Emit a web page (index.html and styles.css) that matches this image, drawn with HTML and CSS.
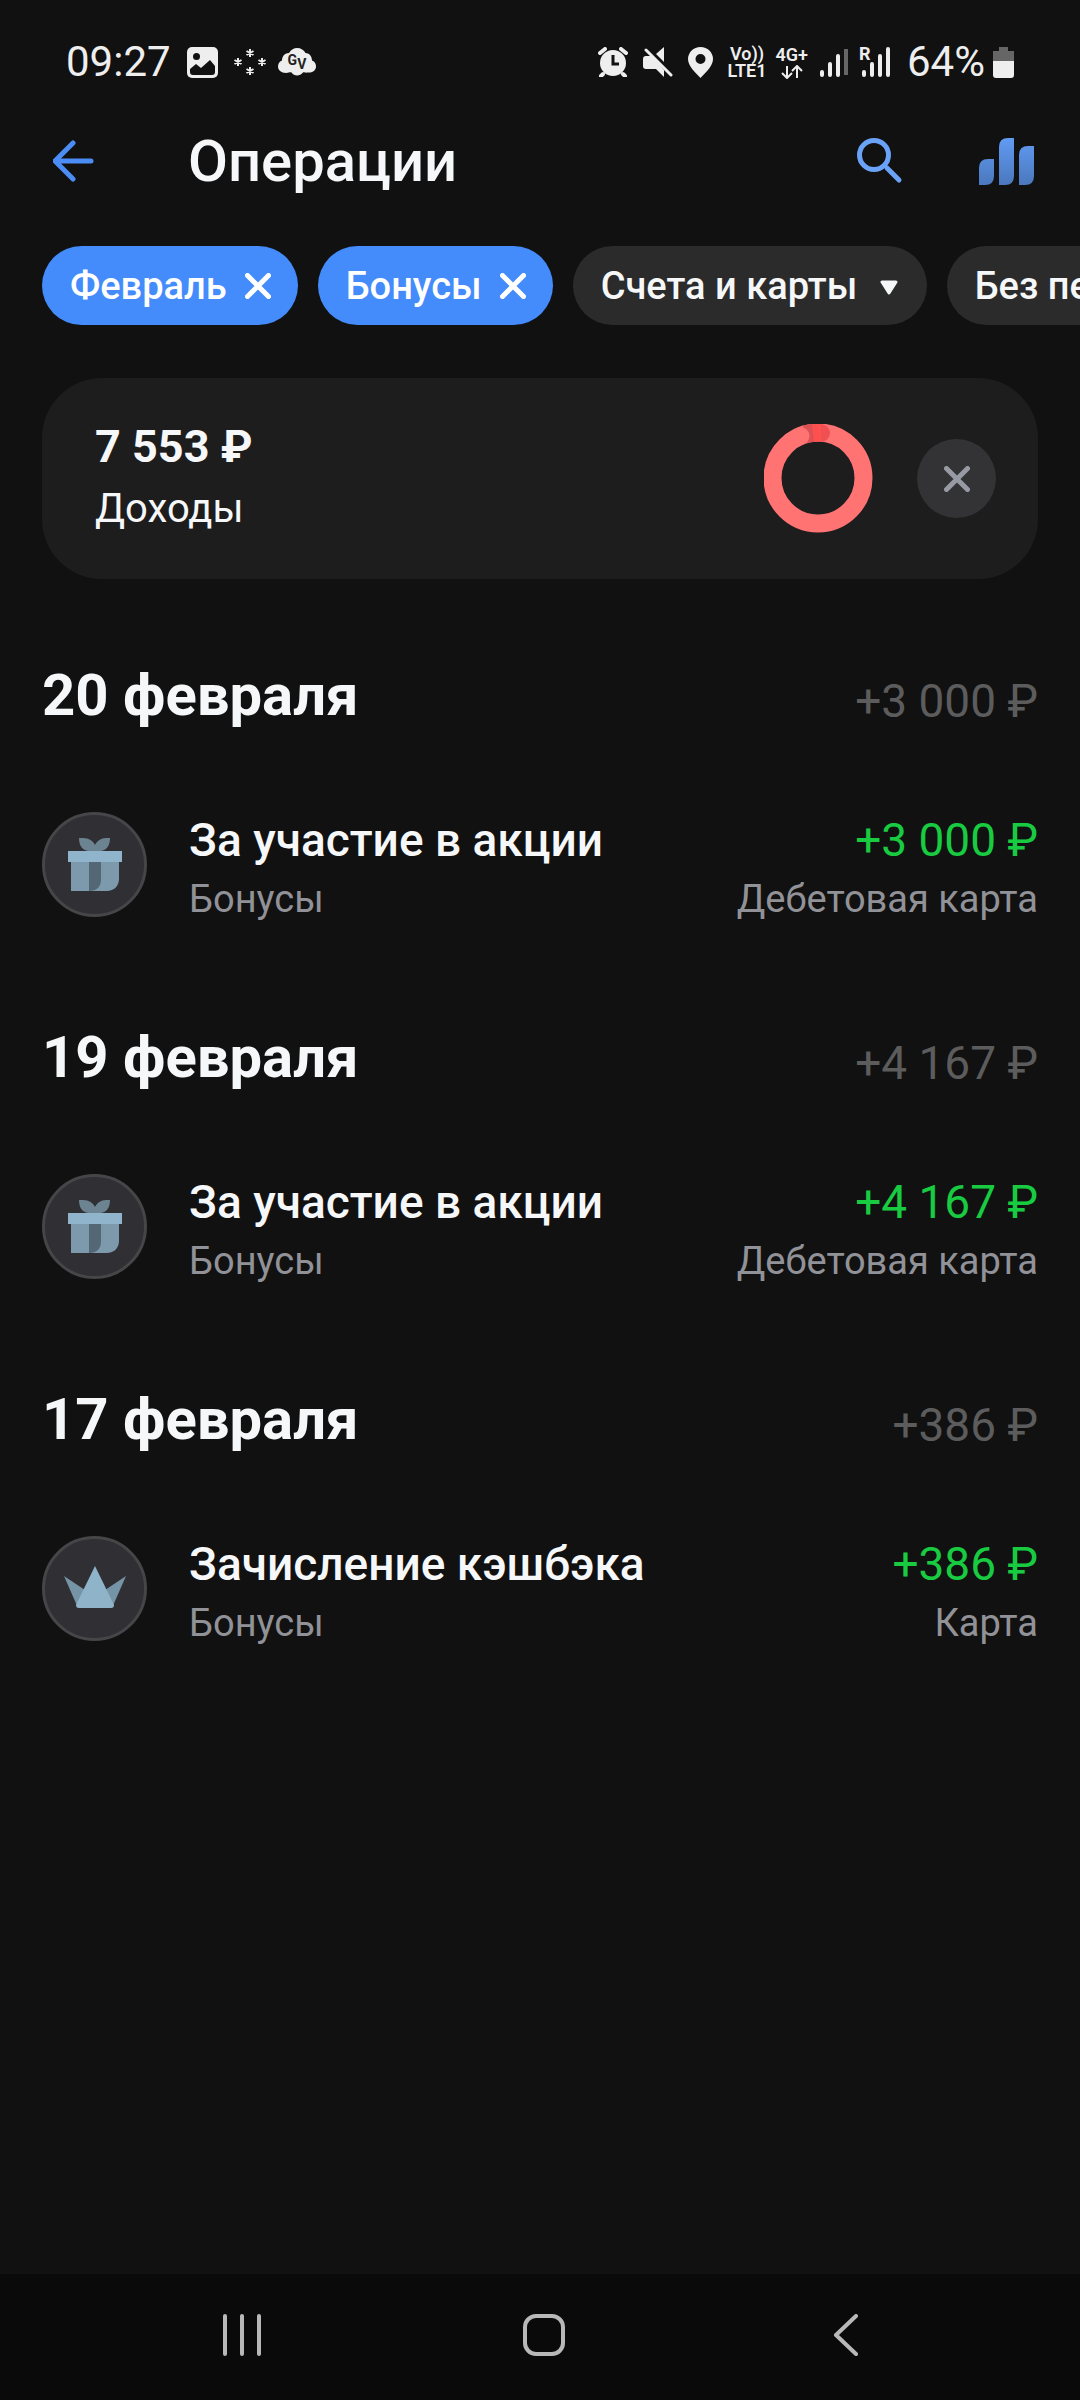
FILE: index.html
```html
<!DOCTYPE html>
<html lang="ru">
<head>
    <meta charset="UTF-8">
    <meta name="viewport" content="width=device-width, initial-scale=1.0">
    <title>Операции</title>
    <link rel="stylesheet" href="styles.css">
</head>
<body>

    <!-- shared icons -->
    <svg class="sprite" aria-hidden="true">
        <symbol id="cross" viewBox="0 0 26 26">
            <path d="M2.5 2.5l21 21M23.5 2.5l-21 21" fill="none" stroke="currentColor" stroke-width="5" stroke-linecap="round"/>
        </symbol>
        <symbol id="gift" viewBox="0 0 54 53">
            <path d="M11 0h4c6 0 10 3 12 7c2-4 6-7 11-7h4c0 8-4 13-10 13H21c-6 0-10-5-10-13z" fill="#6c8492"/>
            <path d="M3 24h48v17c0 7-5 12-12 12H3z" fill="#7c9aab"/>
            <path d="M21 24h12v17c0 8-4 12-12 12z" fill="#536775"/>
            <path d="M0 13h54v11H0z" fill="#8fb4cb"/>
        </symbol>
    </svg>

    <div class="status">
        <span class="time">09:27</span>
        <svg class="st-photo" width="31" height="31" viewBox="0 0 31 31">
            <rect width="31" height="31" rx="5" fill="#eee"/>
            <circle cx="9.500" cy="9.500" r="3.500" fill="#111"/>
            <path d="M3 25v-3l6-5 5 4 9-8 5 6v6c0 2-1 3-3 3H6c-2 0-3-1-3-3z" fill="#111"/>
        </svg>
        <svg class="st-stars" width="34" height="28" viewBox="0 0 34 28">
            <path d="M17 1v8M13.500 3l7 4M20.500 3l-7 4M17 19v8M13.500 21l7 4M20.500 21l-7 4M5 10v8M1.500 12l7 4M8.500 12l-7 4M29 10v8M25.500 12l7 4M32.500 12l-7 4" fill="none" stroke="#eee" stroke-width="2"/>
        </svg>
        <span class="st-cloud">
            <svg width="38" height="28" viewBox="0 0 38 28">
                <path d="M8 25C3 25 0 22 0 18.500C0 15 2 13 4 12.500C4 8 7 5 11 5C13 1.500 16 0 19 0C23 0 26 2 27.500 5C31 5 34 8 34 12.500C37 13.500 38 16 38 18.500C38 22 35 25 30 24.500C27 25 26 24 25 24.500C22 28.500 16 28.500 13.500 24.500C12 24 11 25 8 25z" fill="#eee"/>
            </svg>
            <b>G<sub>V</sub></b>
        </span>

        <svg class="st-alarm" width="30" height="30" viewBox="0 0 30 30">
            <circle cx="15" cy="16" r="13" fill="#eee"/>
            <path d="M2 6l5-4M28 6l-5-4M5 27l-2 2M25 27l2 2" stroke="#eee" stroke-width="4" stroke-linecap="round"/>
            <path d="M15 8v9h6" fill="none" stroke="#111" stroke-width="3"/>
        </svg>
        <svg class="st-mute" width="30" height="30" viewBox="0 0 30 30">
            <path d="M0 12c0-2 1-3 3-3h6l12 14v7l-8-8H3c-2 0-3-1-3-3zM13 7l8-7v15z" fill="#eee"/>
            <path d="M3 3l25 25" stroke="#eee" stroke-width="3" stroke-linecap="round"/>
        </svg>
        <svg class="st-pin" width="25" height="31" viewBox="0 0 25 31">
            <path fill-rule="evenodd" d="M12.500 0C5.500 0 0 5.500 0 12c0 7 7 13 12.500 19C18 25 25 19 25 12C25 5.500 19.500 0 12.500 0zm0 7a5 5 0 1 1 0 10a5 5 0 0 1 0-10z" fill="#eee"/>
        </svg>
        <span class="net">Vo))<br>LTE1</span>
        <span class="net">4G+
            <svg width="22" height="14" viewBox="0 0 22 14">
                <path d="M6 1v11M1 8l5 5 5-5M16 13V2M11 6l5-5 5 5" fill="none" stroke="#eee" stroke-width="2"/>
            </svg>
        </span>
        <svg class="st-signal" width="28" height="30" viewBox="0 0 28 30">
            <path d="M2 25v3M10 17v11M18 9v19" stroke="#eee" stroke-width="4" stroke-linecap="round"/>
            <path d="M26 2v26" stroke="#666" stroke-width="4"/>
        </svg>
        <span class="roaming">
            <svg width="28" height="30" viewBox="0 0 28 30">
                <path d="M2 25v3M10 17v11M18 9v19M26 2v26" stroke="#eee" stroke-width="4" stroke-linecap="round"/>
            </svg>
            <b>R</b>
        </span>
        <span class="percent">64%</span>
        <svg class="st-battery" width="21" height="31" viewBox="0 0 21 31">
            <path d="M6 0h9v4h6v11H0V4h6z" fill="#666"/>
            <path d="M0 14h21v14c0 2-1 3-3 3H3c-2 0-3-1-3-3z" fill="#eee"/>
        </svg>
    </div>

    <header class="header">
        <button class="icon-btn" aria-label="Назад">
            <svg width="42" height="42" viewBox="0 0 42 42">
                <path d="M20 3L2 21l18 18M2 21h36" fill="none" stroke="#4b8df5" stroke-width="5" stroke-linecap="round" stroke-linejoin="round"/>
            </svg>
        </button>
        <h1>Операции</h1>
        <button class="icon-btn" aria-label="Поиск">
            <svg width="46" height="46" viewBox="0 0 46 46">
                <circle cx="17" cy="17" r="14.500" fill="none" stroke="#6aa2f8" stroke-width="5"/>
                <path d="M30 30l12 12" stroke="#6aa2f8" stroke-width="5" stroke-linecap="round"/>
            </svg>
        </button>
        <button class="icon-btn" aria-label="Статистика">
            <svg width="56" height="48" viewBox="0 0 56 48">
                <linearGradient id="bars" gradientUnits="userSpaceOnUse" x1="0" y1="0" x2="0" y2="48">
                    <stop offset="0" stop-color="#629cf5"/>
                    <stop offset="1" stop-color="#4b78bd"/>
                </linearGradient>
                <path d="M1 48V31q0-9 9-9h6v17q0 9-9 9zM21 48V10q0-9 9-9h6v38q0 9-9 9zM41 48V18q0-9 9-9h6v30q0 9-9 9z" fill="url(#bars)"/>
            </svg>
        </button>
    </header>

    <div class="filters">
        <button class="chip active">Февраль <svg width="26" height="26"><use href="#cross"/></svg></button>
        <button class="chip active">Бонусы <svg width="26" height="26"><use href="#cross"/></svg></button>
        <span class="chip">
            <select aria-label="Счета и карты">
                <option>Счета и карты</option>
            </select>
            <svg class="caret" width="18" height="16" viewBox="0 0 18 16">
                <path d="M2 2h14L9 13z" fill="#f6f7f8" stroke="#f6f7f8" stroke-width="3" stroke-linejoin="round"/>
            </svg>
        </span>
        <button class="chip">Без переводов</button>
    </div>

    <main>
        <section class="summary">
            <div class="summary-text">
                <strong>7&nbsp;553&nbsp;₽</strong>
                <span>Доходы</span>
            </div>
            <svg width="110" height="110" viewBox="0 0 110 110">
                <circle cx="54" cy="54" r="45.500" fill="none" stroke="#ff7373" stroke-width="18"/>
                <path d="M41 10.400A45.500 45.500 0 0 1 57 8.600" fill="none" stroke="#dc5153" stroke-width="18"/>
                <path d="M49 8.800A45.500 45.500 0 0 1 57 8.600" fill="none" stroke="#ff5050" stroke-width="18"/>
                <path d="M57 0a9 9 0 0 1 0 18z" fill="#f05052"/>
                <circle cx="36.500" cy="12" r="9" fill="#ff7373"/>
            </svg>
            <button class="close" aria-label="Сбросить"><svg width="26" height="26"><use href="#cross"/></svg></button>
        </section>

        <section class="day">
            <div class="day-head">
                <h2>20 февраля</h2>
                <span>+3&nbsp;000&nbsp;₽</span>
            </div>
            <a class="operation" href="#">
                <span class="avatar"><svg width="54" height="53"><use href="#gift"/></svg></span>
                <span class="info"><b>За участие в акции</b><small>Бонусы</small></span>
                <span class="sum"><b>+3&nbsp;000&nbsp;₽</b><small>Дебетовая карта</small></span>
            </a>
        </section>

        <section class="day">
            <div class="day-head">
                <h2>19 февраля</h2>
                <span>+4&nbsp;167&nbsp;₽</span>
            </div>
            <a class="operation" href="#">
                <span class="avatar"><svg width="54" height="53"><use href="#gift"/></svg></span>
                <span class="info"><b>За участие в акции</b><small>Бонусы</small></span>
                <span class="sum"><b>+4&nbsp;167&nbsp;₽</b><small>Дебетовая карта</small></span>
            </a>
        </section>

        <section class="day">
            <div class="day-head">
                <h2>17 февраля</h2>
                <span>+386&nbsp;₽</span>
            </div>
            <a class="operation" href="#">
                <span class="avatar">
                    <svg width="62" height="46" viewBox="0 0 62 46">
                        <path d="M0 10l21 14-7 18zM62 10L41 24l7 18z" fill="#7594a6"/>
                        <path d="M31 0l19 39q0 3-3 3H15q-3 0-3-3z" fill="#8fb4c9"/>
                    </svg>
                </span>
                <span class="info"><b>Зачисление кэшбэка</b><small>Бонусы</small></span>
                <span class="sum"><b>+386&nbsp;₽</b><small>Карта</small></span>
            </a>
        </section>
    </main>

    <nav class="navbar">
        <button aria-label="Недавние">
            <svg width="42" height="42" viewBox="0 0 42 42"><path d="M4 2v38M21 2v38M38 2v38"/></svg>
        </button>
        <button aria-label="Домой">
            <svg width="42" height="42" viewBox="0 0 42 42"><rect x="2" y="2" width="38" height="38" rx="11"/></svg>
        </button>
        <button aria-label="Назад">
            <svg width="42" height="42" viewBox="0 0 42 42"><path d="M31 2L11 21l20 19"/></svg>
        </button>
    </nav>

</body>
</html>
```
FILE: styles.css
```css
* {
    margin: 0;
    padding: 0;
    box-sizing: border-box;
}

body {
    display: flex;
    flex-direction: column;
    min-height: 100vh;
    overflow-x: hidden;
    background-color: #111;
    color: #f6f7f8;
    font-family: Roboto, sans-serif;
}

button,
select {
    border: none;
    background: none;
    color: inherit;
    font: inherit;
    cursor: pointer;
}

svg {
    display: block;
    flex-shrink: 0;
}

.sprite {
    position: absolute;
    width: 0;
    height: 0;
}

/* status bar */
.status {
    display: flex;
    align-items: center;
    height: 124px;
    padding: 0 66px;
    color: #eee;
}

.time,
.percent {
    font-size: 42px;
    line-height: 48px;
}

.st-photo {
    margin-left: 16px;
}

.st-stars {
    margin-left: 15px;
}

.st-cloud {
    position: relative;
    margin: 0 auto 0 11px;
}

.st-cloud b {
    position: absolute;
    top: 4px;
    left: 10px;
    color: #222;
    font-size: 14px;
    line-height: 16px;
}

.st-cloud sub {
    font-size: 14px;
    line-height: 8px;
}

.st-mute,
.st-pin {
    margin-left: 15px;
}

.net {
    margin-left: 14px;
    font-size: 18px;
    font-weight: 600;
    line-height: 17px;
    text-align: center;
}

.net + .net {
    margin-left: 9px;
}

.net svg {
    margin: 2px auto 0;
}

.st-signal,
.roaming {
    margin-left: 12px;
}

.roaming {
    position: relative;
    padding-left: 2px;
}

.roaming b {
    position: absolute;
    top: -3px;
    left: -1px;
    font-size: 18px;
    line-height: 20px;
}

.percent {
    margin-left: 17px;
}

.st-battery {
    margin-left: 8px;
}

/* header */
.header {
    display: flex;
    align-items: center;
    padding: 0 42px;
}

.header h1 {
    flex: 1;
    margin-left: 82px;
    font-size: 58px;
    font-weight: 500;
    line-height: 74px;
}

.icon-btn {
    display: flex;
    justify-content: center;
    align-items: center;
    width: 64px;
    height: 64px;
}

.icon-btn + .icon-btn {
    margin-left: 62px;
}

/* filters */
.filters {
    display: flex;
    gap: 20px;
    margin-top: 48px;
    padding-left: 42px;
    overflow: hidden;
}

.chip {
    display: flex;
    flex-shrink: 0;
    align-items: center;
    gap: 18px;
    height: 79px;
    padding: 0 27px 0 28px;
    border-radius: 40px;
    background-color: #2b2b2b;
    font-size: 38px;
    font-weight: 500;
    white-space: nowrap;
}

.chip.active {
    background-color: #448bfb;
    color: #fff;
}

.chip select {
    appearance: none;
    outline: none;
}

.caret {
    margin: 4px 2px 0 4px;
    pointer-events: none;
}

/* summary card */
main {
    flex: 1;
    padding: 53px 42px 0;
}

.summary {
    display: flex;
    align-items: center;
    height: 201px;
    padding: 0 42px 0 53px;
    border-radius: 60px;
    background-color: #1d1d1e;
}

.summary-text {
    display: flex;
    flex: 1;
    flex-direction: column;
    gap: 8px;
    padding-bottom: 4px;
}

.summary strong {
    font-size: 45px;
    font-weight: 700;
    line-height: 56px;
}

.summary span {
    font-size: 40px;
    line-height: 52px;
}

.close {
    display: flex;
    justify-content: center;
    align-items: center;
    width: 79px;
    height: 79px;
    margin-left: 43px;
    border-radius: 50%;
    background-color: #333335;
    color: #9799a3;
}

/* operations */
.day {
    margin-top: 82px;
}

.day + .day {
    margin-top: 101px;
}

.day-head {
    display: flex;
    justify-content: space-between;
    align-items: flex-end;
}

.day-head h2 {
    font-size: 58px;
    font-weight: 700;
    line-height: 68px;
}

.day-head span {
    color: #5c5c5d;
    font-size: 46px;
    line-height: 56px;
}

.operation {
    display: flex;
    align-items: flex-start;
    margin-top: 83px;
    color: inherit;
    text-decoration: none;
}

.avatar {
    display: flex;
    justify-content: center;
    align-items: center;
    width: 105px;
    height: 105px;
    margin-right: 42px;
    border: 3px solid #464649;
    border-radius: 50%;
    background-color: #2f2f34;
}

.info,
.sum {
    display: flex;
    flex-direction: column;
    gap: 8px;
}

.info {
    flex: 1;
}

.sum {
    text-align: right;
}

.operation b {
    font-size: 46px;
    font-weight: 500;
    line-height: 56px;
}

.operation small {
    color: #919298;
    font-size: 38px;
    line-height: 46px;
}

.operation .sum b {
    color: #18cb41;
    font-weight: 400;
}

/* system buttons */
.navbar {
    display: flex;
    justify-content: space-around;
    align-items: center;
    height: 126px;
    padding: 0 83px 4px 91px;
    background-color: #0a0a0a;
}

.navbar button {
    padding: 20px;
}

.navbar svg {
    fill: none;
    stroke: #b8b8b8;
    stroke-width: 4;
    stroke-linecap: round;
    stroke-linejoin: round;
}
```
